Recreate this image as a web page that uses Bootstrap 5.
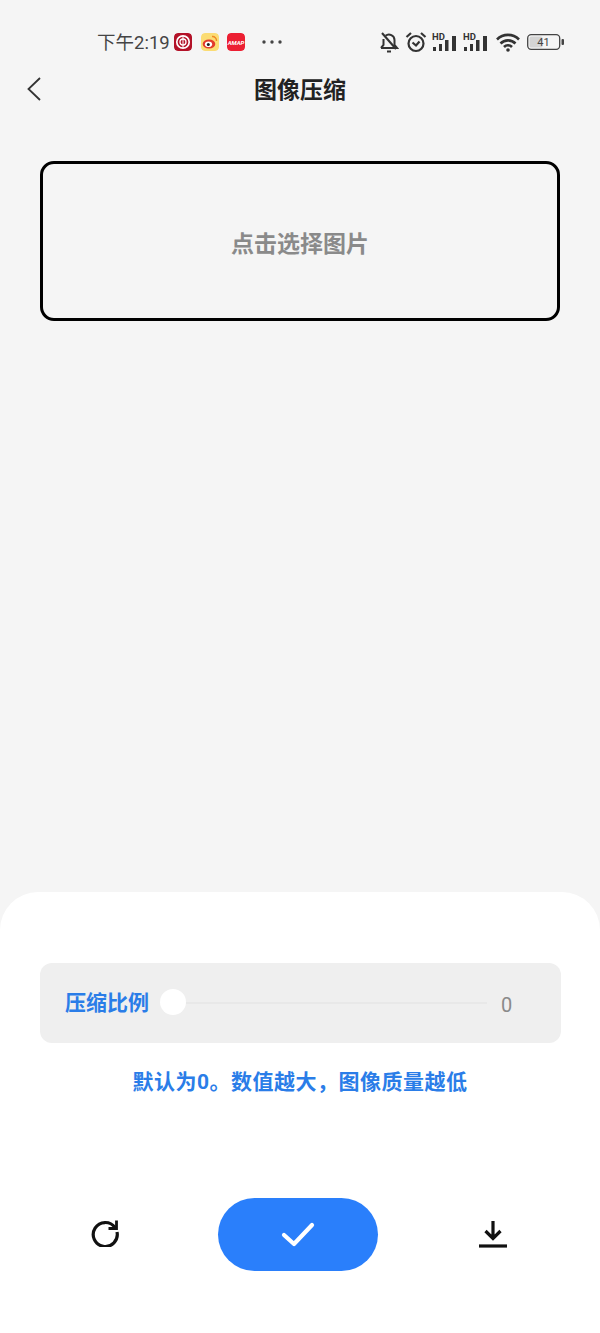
<!DOCTYPE html>
<html lang="zh">
<head>
<meta charset="utf-8">
<title>图像压缩</title>
<link href="https://cdn.jsdelivr.net/npm/bootstrap@5.3.0/dist/css/bootstrap.min.css" rel="stylesheet">
<style>
html,body{height:1333px;overflow:hidden}
body{background:#f5f5f5;font-family:Roboto,"Noto Sans CJK SC",sans-serif;width:600px}
.shell{height:1333px}
.stat{height:30px;margin-top:27px;padding-left:97px;color:#444;font-size:18.5px}
.stat-time{width:77px;white-space:nowrap;margin-top:4px}
.app{width:18px;height:18px;border-radius:4px;flex:none}
.gap-app{margin-left:8.5px}
.dots{margin-left:17px;margin-right:97px;width:20px}
.gap-a{margin-left:6px}
.gap-b{margin-left:5px}
.gap-c{margin-left:4px}
.gap-d{margin-left:7px}
.head{height:44px;margin-top:11px;padding-left:26px}
.head-back{margin-bottom:3px}
.head-title{font-size:23px;font-weight:700;color:#222;top:1px;left:0;right:0;line-height:44px}
.pick{height:160px;margin:49px 40px 0;padding-top:9px;border:3px solid #000;border-radius:14px;color:#8a8a8a;font-size:23px;font-weight:700}
.sheet{height:441px;background:#fff;border-radius:38px 38px 0 0;padding-top:71px}
.panel{height:80px;margin:0 39px 0 40px;background:#efefef;border-radius:12px;padding-left:25px}
.panel-label{width:95px;color:#2a7de8;font-size:21px;font-weight:700;white-space:nowrap;margin-top:2px}
.knob{width:26px;height:26px;border-radius:50%;background:#fff;flex:none;margin-top:-3px}
.track{width:301px;height:2px;background:#e8e8e8}
.panel-val{margin-left:14px;margin-top:4px;color:#8a8a8a;font-size:20px}
.hint{margin-top:25px;color:#2a7de8;font-size:21px;letter-spacing:.5px;font-weight:700;line-height:28px;text-align:center}
.acts{margin-top:102px;height:73px;padding-left:45px}
.act-ic{width:120px}
.act-l{margin-right:53px}
.act-r{margin-left:55px}
.lift-refresh{margin-bottom:6px}
.lift-save{margin-bottom:2px}
.go{width:160px;height:73px;border-radius:37px;background:#2a7ffb;border:0}
</style>
</head>
<body>
<div class="shell d-flex flex-column">
  <div class="stat d-flex align-items-center">
    <span class="stat-time">下午2:19</span>
    <svg class="app" viewBox="0 0 18 18"><rect width="18" height="18" rx="4" fill="#b31228"/><circle cx="9" cy="9" r="6.2" fill="none" stroke="#fff" stroke-width="1.7"/><circle cx="9" cy="9" r="3" fill="none" stroke="#fff" stroke-width="1.3"/><path d="M9 3v12" stroke="#fff" stroke-width="1"/></svg>
    <svg class="app gap-app" viewBox="0 0 18 18"><rect width="18" height="18" rx="4" fill="#fbdc74"/><ellipse cx="8" cy="11" rx="6.3" ry="4.6" fill="#e33a2c"/><ellipse cx="7.5" cy="11.3" rx="3.6" ry="2.8" fill="#fff"/><circle cx="7.3" cy="11.5" r="1.5" fill="#222"/><path d="M11 3.500a4 4 0 0 1 4.500 4.500" fill="none" stroke="#f08a24" stroke-width="1.4"/></svg>
    <svg class="app gap-app" viewBox="0 0 18 18"><rect width="18" height="18" rx="4" fill="#ec1f32"/><text x="9" y="11.500" font-size="6" font-weight="700" font-style="italic" font-family="Roboto,sans-serif" text-anchor="middle" fill="#fff">AMAP</text></svg>
    <svg class="dots" height="4" viewBox="0 0 20 4"><circle cx="2" cy="2" r="1.7" fill="#444"/><circle cx="10" cy="2" r="1.7" fill="#444"/><circle cx="18" cy="2" r="1.7" fill="#444"/></svg>
    <svg width="20" height="22" viewBox="0 0 20 22" fill="none" stroke="#333" stroke-width="2"><path d="M2 17h16l-2.500-3V9a5.500 5.500 0 0 0-9-4.200M4.500 8v6L2 17"/><path d="M8 20.500h4"/><path d="M3 2l14 16"/></svg>
    <svg class="gap-a" width="22" height="22" viewBox="0 0 22 22" fill="none" stroke="#333" stroke-width="2.200"><circle cx="11" cy="12.500" r="7.500"/><path d="M7.500 11.500l3.500 3 3.500-4"/><path d="M1.500 6L6 2M20.500 6L16 2"/></svg>
    <svg class="gap-b" width="27" height="22" viewBox="0 0 27 22"><rect x="1" y="16" width="3" height="4" fill="#333"/><rect x="7" y="13" width="3" height="7" fill="#333"/><rect x="13" y="9" width="3.500" height="11" fill="#333"/><rect x="20" y="5" width="4" height="15" fill="#333"/><text x="0" y="9" font-size="9.500" font-weight="700" font-family="Roboto,sans-serif" fill="#333">HD</text></svg>
    <svg class="gap-c" width="27" height="22" viewBox="0 0 27 22"><rect x="1" y="16" width="3" height="4" fill="#333"/><rect x="7" y="13" width="3" height="7" fill="#333"/><rect x="13" y="9" width="3.500" height="11" fill="#333"/><rect x="20" y="5" width="4" height="15" fill="#333"/><text x="0" y="9" font-size="9.500" font-weight="700" font-family="Roboto,sans-serif" fill="#333">HD</text></svg>
    <svg class="gap-a" width="24" height="22" viewBox="0 0 24 22" fill="none" stroke="#333" stroke-width="2.600"><path d="M1 8.500a15.500 15.500 0 0 1 22 0M4.500 12.500a10.500 10.500 0 0 1 15 0M8 16a5.500 5.500 0 0 1 8 0"/><circle cx="12" cy="19" r="1.800" fill="#333" stroke="none"/></svg>
    <svg class="gap-d" width="38" height="16" viewBox="0 0 38 16"><rect x=".7" y=".7" width="32" height="14.600" rx="3.500" fill="none" stroke="#444" stroke-width="1.300"/><rect x="2.500" y="2.500" width="13" height="11" rx="1.500" fill="#d4d4d4"/><text x="16.500" y="12.300" font-size="11" font-family="Roboto,sans-serif" text-anchor="middle" fill="#444">41</text><rect x="34.500" y="5" width="2.500" height="6" rx="1" fill="#444"/></svg>
  </div>
  <div class="head position-relative d-flex align-items-center">
    <svg class="head-back" width="16" height="26" viewBox="0 0 16 26" fill="none" stroke="#333" stroke-width="1.800"><path d="M14 2L2.500 13 14 24"/></svg>
    <div class="head-title position-absolute text-center">图像压缩</div>
  </div>
  <div class="pick d-flex align-items-center justify-content-center">点击选择图片</div>
  <div class="flex-grow-1"></div>
  <div class="sheet">
    <div class="panel d-flex align-items-center">
      <span class="panel-label">压缩比例</span>
      <span class="knob"></span>
      <span class="track"></span>
      <span class="panel-val">0</span>
    </div>
    <div class="hint">默认为0。数值越大，图像质量越低</div>
    <div class="acts d-flex align-items-center">
      <div class="act-ic act-l d-flex justify-content-center">
        <svg class="lift-refresh" width="30" height="30" viewBox="0 0 30 30" fill="none" stroke="#111" stroke-width="3.200"><path d="M25 10.500A12 12 0 1 0 27 15"/><path d="M26.500 3.500v8h-8" stroke-width="2.800"/></svg>
      </div>
      <button class="go btn d-flex align-items-center justify-content-center" type="button" aria-label="确认">
        <svg width="34" height="26" viewBox="0 0 34 26" fill="none" stroke="#fff" stroke-width="4.200" stroke-linecap="round" stroke-linejoin="round"><path d="M3 13l10 9L31 3"/></svg>
      </button>
      <div class="act-ic act-r d-flex justify-content-center">
        <svg class="lift-save" width="30" height="28" viewBox="0 0 30 28" fill="none" stroke="#111" stroke-width="3.200"><path d="M15 1v17M7.500 11l7.500 7.500 7.500-7.500"/><path d="M1 26h28"/></svg>
      </div>
    </div>
  </div>
</div>
</body>
</html>
